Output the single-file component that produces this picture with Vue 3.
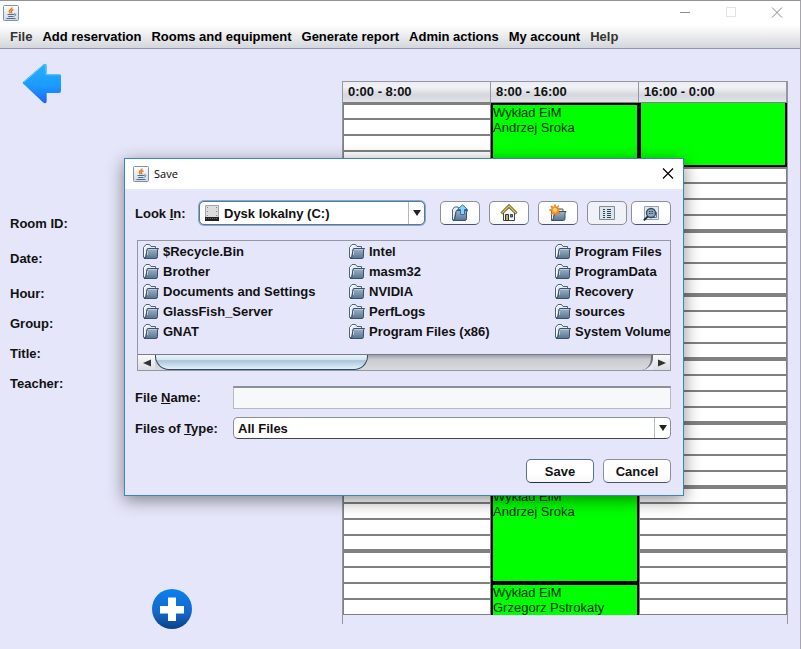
<script setup>
import { ref } from 'vue'

const menus = [
  { label: 'File', soft: true },
  { label: 'Add reservation' },
  { label: 'Rooms and equipment' },
  { label: 'Generate report' },
  { label: 'Admin actions' },
  { label: 'My account' },
  { label: 'Help', soft: true }
]

const details = ['Room ID:', 'Date:', 'Hour:', 'Group:', 'Title:', 'Teacher:']

const shifts = ['0:00 - 8:00', '8:00 - 16:00', '16:00 - 0:00']
const slotCount = 32
const events = [
  { shift: 1, start: 0, length: 4, lines: ['Wykład EiM', 'Andrzej Sroka'] },
  { shift: 2, start: 0, length: 4, lines: [], openTop: true },
  { shift: 1, start: 24, length: 6, lines: ['Wykład EiM', 'Andrzej Sroka'] },
  { shift: 1, start: 30, length: 2, lines: ['Wykład EiM', 'Grzegorz Pstrokaty'], openBottom: true }
]

// Cells of one quarter-hour row; a slot covered by an earlier event has no cell.
function cellsFor(slot) {
  const cells = []
  shifts.forEach((_, shift) => {
    const event = events.find(e => e.shift === shift && slot >= e.start && slot < e.start + e.length)
    if (!event) cells.push({ shift, span: 1, event: null })
    else if (event.start === slot) cells.push({ shift, span: event.length, event })
  })
  return cells
}

const rows = Array.from({ length: slotCount }, (_, slot) => ({
  slot,
  hourStart: slot % 4 === 0 && slot > 0,
  hourEnd: slot % 4 === 3 && slot < slotCount - 1,
  cells: cellsFor(slot)
}))

const folders = [
  '$Recycle.Bin', 'Brother', 'Documents and Settings', 'GlassFish_Server', 'GNAT',
  'Intel', 'masm32', 'NVIDIA', 'PerfLogs', 'Program Files (x86)',
  'Program Files', 'ProgramData', 'Recovery', 'sources', 'System Volume Information'
]

const fileName = ref('')
</script>

<template>
  <div class="window">
    <svg width="0" height="0" class="defs" aria-hidden="true">
      <defs>
        <linearGradient id="folderFill" x1="0" y1="0" x2="0" y2="1">
          <stop offset="0" stop-color="#9fb4c7" /><stop offset="1" stop-color="#557590" />
        </linearGradient>
        <linearGradient id="arrowFill" x1="0" y1="0" x2="0" y2="1">
          <stop offset="0" stop-color="#25b0ff" /><stop offset=".55" stop-color="#1c9bff" /><stop offset="1" stop-color="#1c66f5" />
        </linearGradient>
        <linearGradient id="plusFill" x1="0" y1="0" x2="0" y2="1">
          <stop offset="0" stop-color="#0a80ee" /><stop offset=".6" stop-color="#1467c8" /><stop offset="1" stop-color="#0a3f88" />
        </linearGradient>
        <linearGradient id="javaFill" x1="0" y1="0" x2="0" y2="1">
          <stop offset="0" stop-color="#ffffff" /><stop offset="1" stop-color="#cfd8e2" />
        </linearGradient>
        <symbol id="java" viewBox="0 0 16 16">
          <rect x=".5" y=".5" width="15" height="15" rx="1" fill="url(#javaFill)" stroke="#7f93a6" />
          <path d="M9.300 2.500C9 4.200 5.900 4.700 6.300 6.500c.2.8.8 1.200 1 1.900M10.500 4.800C8.500 5.300 7.600 6.200 8.500 7.200c.3.4.2.8 0 1.200" fill="none" stroke="#e8791c" stroke-width="1.400" />
          <path d="M4.500 9.500h6.500M5.200 11.500h5.300M11 9c2-.6 2.700 1 .4 2.200M3.500 13.500h9" fill="none" stroke="#4a6d92" />
        </symbol>
        <symbol id="folder" viewBox="0 0 16 16">
          <path d="M.5 14.500V4.500L3 1.500h3.500L8 3.500h4.500V6h-8l-2 8.500Z" fill="#e4edf5" stroke="#4d6377" />
          <path d="M1.500 13V5l2-2.500H6" fill="none" stroke="#fff" />
          <path d="M1 15.500c1.500-.5 2-1.500 2.200-3L4 6.500Q4.200 5.500 5 5.500h10.500l-1 1.500v6.500q0 2-1.500 2Z" fill="url(#folderFill)" stroke="#3b5167" />
          <path d="M5 6.500h9M4.500 8v4" stroke="#bccbd9" fill="none" />
        </symbol>
      </defs>
    </svg>

    <header class="titlebar">
      <svg width="16" height="16" role="img" aria-label="Java"><use href="#java" /></svg>
      <div class="window-controls">
        <button type="button" aria-label="Minimize">
          <svg width="12" height="12" viewBox="0 0 12 12"><path d="M1 5.500h10" stroke="#8c8c8c" /></svg>
        </button>
        <button type="button" aria-label="Maximize" disabled>
          <svg width="12" height="12" viewBox="0 0 12 12"><path d="M1.500 .5h9v9h-9z" fill="none" stroke="#e2e2e2" /></svg>
        </button>
        <button type="button" aria-label="Close">
          <svg width="12" height="12" viewBox="0 0 12 12"><path d="M1 .5l10 10M11 .5 1 10.500" stroke="#858585" /></svg>
        </button>
      </div>
    </header>

    <nav class="menubar">
      <button v-for="menu in menus" :key="menu.label" type="button" :class="{ soft: menu.soft }">{{ menu.label }}</button>
    </nav>

    <main class="content">
      <section class="sidebar">
        <button type="button" class="back" aria-label="Back">
          <svg width="40" height="42" viewBox="0 0 40 42">
            <path d="M1 20.500Q.5 19.500 1.500 18.500L21 1.700Q24.500-.5 24.700 3v8H37q2 0 2 2v15q0 2-2 2H24.700v8q-.3 3.500-3.500 1.500Z" fill="url(#arrowFill)" />
            <path d="M2 19 21.500 2.200Q24 1 24 4v7.700H38" fill="none" stroke="#62cbff" />
          </svg>
        </button>
        <ul class="details">
          <li v-for="label in details" :key="label">{{ label }}</li>
        </ul>
        <button type="button" class="add" aria-label="Add">
          <svg width="40" height="40" viewBox="0 0 40 40">
            <circle cx="20" cy="20" r="20" fill="url(#plusFill)" />
            <path d="M16 8.500h8V17h8v7.500h-8V32h-8v-7.500H8V17h8Z" fill="#fff" />
          </svg>
        </button>
      </section>

      <section class="calendar">
        <table>
          <thead>
            <tr><th v-for="shift in shifts" :key="shift" scope="col">{{ shift }}</th></tr>
          </thead>
          <tbody>
            <tr v-for="row in rows" :key="row.slot" :class="{ 'hour-start': row.hourStart, 'hour-end': row.hourEnd }">
              <td
                v-for="cell in row.cells"
                :key="cell.shift"
                :rowspan="cell.span"
                :class="{ event: cell.event, 'open-top': cell.event?.openTop, 'open-bottom': cell.event?.openBottom }"
              >
                <template v-if="cell.event">
                  <div v-for="line in cell.event.lines" :key="line">{{ line }}</div>
                </template>
              </td>
            </tr>
          </tbody>
        </table>
      </section>
    </main>

    <div class="dialog" role="dialog" aria-labelledby="dialog-title">
      <div class="dialog-title">
        <svg width="16" height="16" aria-hidden="true"><use href="#java" /></svg>
        <span id="dialog-title">Save</span>
        <button type="button" aria-label="Close dialog">
          <svg width="12" height="12" viewBox="0 0 12 12"><path d="M1 .5l10 10M11 .5 1 10.500" stroke="#000" stroke-width="1.200" /></svg>
        </button>
      </div>

      <form class="dialog-body" @submit.prevent>
        <div class="look-row">
          <label for="look-in">Look <u>I</u>n:</label>
          <div class="combo focused">
            <select id="look-in"><option>Dysk lokalny (C:)</option></select>
            <svg class="drive" width="14" height="16" viewBox="0 0 14 16" aria-hidden="true">
              <path d="M.5.500h13v12H.5z" fill="#dcdcdc" stroke="#a5a5a5" />
              <path d="M2 2.500h1M11 2.500h1M2 6.500h1M11 6.500h1M2 10.500h1M11 10.500h1" stroke="#888" />
              <path d="M0 12h14v4H0z" fill="#222" /><path d="M1 13.500h12" stroke="#666" stroke-dasharray="1 1" />
            </svg>
            <span class="arrow" aria-hidden="true"></span>
          </div>
          <div class="tools">
            <button type="button" aria-label="Up one level">
              <svg width="18" height="18" viewBox="0 0 18 18">
                <path d="M1.500 16V5.500l2-2.500H7l1 1.500h6V8H5l-2 8Z" fill="#e4edf5" stroke="#4d6377" />
                <path d="M2 16.500c1.500-.5 2-1.500 2.200-3L5 7.500Q5.200 6.500 6 6.500h10.500l-1 1.500v6.500q0 2-1.500 2Z" fill="url(#folderFill)" stroke="#3b5167" />
                <path d="M11.500.8 16.500 5.500h-3v5h-4v-5h-3Z" fill="#8fd0f5" stroke="#2a73b0" />
              </svg>
            </button>
            <button type="button" aria-label="Home">
              <svg width="18" height="18" viewBox="0 0 18 18">
                <path d="M3.500 8.500 9 3.500l5.500 5v8h-11Z" fill="#f4f5f8" stroke="#444" />
                <path d="M1.500 9.500 9 2l7.500 7.500" fill="none" stroke="#65551b" stroke-width="3" />
                <path d="M1.800 9.200 9 2l7.200 7.200" fill="none" stroke="#d9c567" stroke-width="1.300" />
                <path d="M5.500 10.500h3v6h-3z" fill="#c9a968" stroke="#333" /><path d="M10.500 10.500h2v2.500h-2z" fill="#5d8bb5" stroke="#345" />
              </svg>
            </button>
            <button type="button" aria-label="Create new folder">
              <svg width="18" height="18" viewBox="0 0 18 18">
                <path d="M2.500 16V5.500l2-2H8L9 5h5v3H6l-2 8Z" fill="#e4edf5" stroke="#4d6377" />
                <path d="M2.500 16.500c1.500-.5 2-1.500 2.200-3L5.500 8.500Q5.700 7.500 6.500 7.500h10.500l-1 1.500v5.500q0 2-1.500 2Z" fill="url(#folderFill)" stroke="#3b5167" />
                <path d="m6 .5 1 3 2.500-2-.8 3.200 3 .3-2.600 1.600L11 9.500l-3-.8L6.500 12l-1.300-3L2 10.500l1-3.300L.3 6l2.900-1.200L1.800 2l3 1.200Z" fill="#ff9c24" stroke="#e86b16" stroke-width=".7" />
                <circle cx="6" cy="6" r="2" fill="#ffdf6b" />
              </svg>
            </button>
            <button type="button" class="pressed" aria-label="List" aria-pressed="true">
              <svg width="16" height="16" viewBox="0 0 16 16">
                <path d="M.5 1.500h15v13H.5z" fill="#dce5ed" stroke="#7b8c9b" />
                <path d="M4 4.500h2M4 6.500h2M4 8.500h2M4 10.500h2M4 12.500h2M8 4.500h4M8 6.500h4M8 8.500h4M8 10.500h4M8 12.500h4" stroke="#344556" />
              </svg>
            </button>
            <button type="button" class="details-view" aria-label="Details">
              <svg width="16" height="16" viewBox="0 0 16 16">
                <path d="M1.500 1.500h14v13h-14z" fill="#dfe7ef" stroke="#93a2b1" />
                <path d="M7 12.500h6.500V7" stroke="#62768a" fill="none" />
                <circle cx="8" cy="8" r="4.500" fill="#8fabc2" stroke="#34485a" stroke-width="1.300" />
                <path d="M6 6.500h1.500M8.500 6.500H10M6 8.500h1.500M8.500 8.500H10" stroke="#2e3f50" />
                <path d="M4.800 11.300.8 15.300" stroke="#222" stroke-width="1.800" />
              </svg>
            </button>
          </div>
        </div>

        <div class="browser">
          <ul class="files">
            <li v-for="name in folders" :key="name">
              <svg width="16" height="16" aria-hidden="true"><use href="#folder" /></svg>
              <span>{{ name }}</span>
            </li>
          </ul>
          <div class="scrollbar">
            <button type="button" aria-label="Scroll left"><svg width="8" height="8" viewBox="0 0 8 8"><path d="M0 4 8 .5v7Z" fill="#333" /></svg></button>
            <div class="track"><div class="thumb"></div></div>
            <button type="button" aria-label="Scroll right"><svg width="8" height="8" viewBox="0 0 8 8"><path d="M8 4 0 .5v7Z" fill="#333" /></svg></button>
          </div>
        </div>

        <div class="fields">
          <label for="file-name">File <u>N</u>ame:</label>
          <input id="file-name" v-model="fileName" type="text" />
          <label for="file-type">Files of <u>T</u>ype:</label>
          <div class="combo">
            <select id="file-type"><option>All Files</option></select>
            <span class="arrow" aria-hidden="true"></span>
          </div>
        </div>

        <div class="actions">
          <button type="submit" class="primary">Save</button>
          <button type="button">Cancel</button>
        </div>
      </form>
    </div>
  </div>
</template>

<style>
body {
  background: #e6e6fa;
}
</style>

<style scoped>
.window {
  position: relative;
  box-sizing: border-box;
  min-height: 100vh;
  display: flex;
  flex-direction: column;
  border-top: 1px solid #8f9499;
  border-right: 1px solid #a5a5aa;
  background: #e6e6fa;
  color: #111;
  font: bold 13px/15px "Liberation Sans", Arial, sans-serif;
}
.defs {
  position: absolute;
}
button,
input,
select {
  font: inherit;
  color: inherit;
  margin: 0;
  padding: 0;
  box-sizing: border-box;
}
ul {
  list-style: none;
  margin: 0;
  padding: 0;
}
svg {
  display: block;
  flex: none;
}

.titlebar {
  height: 24px;
  display: flex;
  align-items: center;
  justify-content: space-between;
  padding-left: 3px;
  background: #fff;
}
.window-controls {
  display: flex;
}
.window-controls button {
  width: 46px;
  height: 24px;
  display: grid;
  place-items: center;
  border: 0;
  background: none;
}
.menubar {
  height: 24px;
  box-sizing: border-box;
  display: flex;
  align-items: center;
  gap: 10px;
  padding: 0 10px;
  border-bottom: 1px solid #9297a1;
  background: linear-gradient(#fff, #f3f3f5 30%, #d3d6db);
}
.menubar button {
  border: 0;
  background: none;
  white-space: nowrap;
  color: #000;
}
.menubar .soft {
  color: #333;
}

.content {
  flex: 1;
  display: flex;
}
.sidebar {
  width: 342px;
  flex: none;
  display: flex;
  flex-direction: column;
}
.back,
.add {
  border: 0;
  background: none;
}
.back {
  align-self: flex-start;
  margin: 14px 0 0 22px;
}
.details {
  display: flex;
  flex-direction: column;
  gap: 15px;
  padding: 111px 10px 0;
}
.details li:nth-child(-n + 2) {
  padding-bottom: 5px;
}
.add {
  align-self: flex-start;
  margin: auto 0 20px 152px;
}

.calendar {
  flex: 1;
  align-self: flex-start;
  margin: 32px 12px 0 0;
  padding-bottom: 9px;
  border: 1px solid #9297a1;
  border-bottom: 0;
}
table {
  width: 100%;
  table-layout: fixed;
  border-collapse: separate;
  border-spacing: 0;
}
th {
  box-sizing: border-box;
  height: 21px;
  padding: 0 5px 2px;
  text-align: left;
  border-right: 1px solid #9297a1;
  border-bottom: 1px solid #808080;
  background: linear-gradient(#ececf2, #f1f2f5 25%, #d4d7dd 65%, #e2e4ea);
}
td {
  box-sizing: border-box;
  height: 16px;
  padding: 0;
  border: 1px solid #808080;
  background: #fff;
  font-weight: normal;
  line-height: 15px;
  vertical-align: top;
}
tbody tr:first-child td,
.hour-start td {
  border-top-width: 2px;
}
.hour-end td {
  border-bottom-width: 2px;
}
tbody tr td.event {
  border: 2px solid #000;
  background: #0f0;
  color: #002d00;
}
tbody tr td.open-top {
  border-top: 0;
}
tbody tr td.open-bottom {
  border-bottom: 0;
}

.dialog {
  position: absolute;
  left: 124px;
  top: 157px;
  width: 560px;
  box-sizing: border-box;
  border: 1px solid #3a86bd;
  background: #e6e6fa;
  box-shadow: 0 4px 16px rgba(0, 0, 0, 0.45);
}
.dialog-title {
  height: 30px;
  display: flex;
  align-items: center;
  gap: 5px;
  padding: 0 9px 0 8px;
  background: #fff;
  color: #000;
  font: 11px/16px "Open Sans", "Noto Sans", sans-serif;
}
.dialog-title button {
  margin-left: auto;
  border: 0;
  background: none;
}
.dialog-body {
  padding: 12px 12px 12px 10px;
}
.look-row {
  display: flex;
  align-items: center;
}
.look-row label {
  width: 64px;
}
.look-row .combo {
  flex: 1;
}
.combo {
  position: relative;
  display: flex;
}
.combo select {
  appearance: none;
  width: 100%;
  height: 22px;
  padding: 0 20px 0 4px;
  border: 1px solid #8a8f98;
  border-bottom-color: #3f4650;
  border-radius: 5px;
  background: #fff;
  outline: none;
}
.focused select {
  height: 24px;
  padding-left: 24px;
  border-color: #557a9c;
  box-shadow: 0 0 0 1px #8aa8c4;
}
.drive {
  position: absolute;
  left: 6px;
  top: 4px;
}
.arrow {
  position: absolute;
  top: 1px;
  right: 1px;
  bottom: 1px;
  width: 15px;
  border-left: 1px solid #b5b9c0;
  display: grid;
  place-items: center;
  pointer-events: none;
}
.arrow::after {
  content: "";
  border: solid transparent;
  border-width: 6px 4px 0;
  border-top-color: #222;
}
.tools {
  display: flex;
  gap: 9px;
  margin-left: 15px;
}
.tools button {
  width: 40px;
  height: 24px;
  display: grid;
  place-items: center;
}
.tools button,
.actions button {
  border: 1px solid #8a8f98;
  border-bottom-color: #4d545e;
  border-radius: 5px;
  background: linear-gradient(#fff, #fff 60%, #f6f7fa);
}
.tools .pressed {
  border-color: #8a8f98;
  background: #f1f2f8;
}
.tools .details-view {
  margin-left: -5px;
}

.browser {
  margin: 15px 0 0 2px;
  border: 1px solid #9297a1;
}
.files {
  display: grid;
  grid-auto-flow: column;
  grid-template-rows: repeat(5, 20px);
  grid-auto-columns: 206px;
  padding: 0 0 13px 5px;
  overflow: hidden;
}
.files li {
  display: flex;
  align-items: center;
  gap: 4px;
  white-space: nowrap;
}
.scrollbar {
  display: flex;
  height: 15px;
  border-top: 1px solid #777c85;
}
.scrollbar button {
  width: 17px;
  display: grid;
  place-items: center;
  border: 0;
  background: linear-gradient(#fafafc, #dcdde2);
}
.track {
  flex: 1;
  background: linear-gradient(#9c9fa6, #c9cbd0 30%, #dadbdf);
  border-right: 2px solid #6b6f77;
  border-radius: 0 0 12px 0;
}
.thumb {
  box-sizing: border-box;
  width: 43%;
  height: 15px;
  border: 1px solid #34495e;
  border-top: 0;
  border-radius: 0 0 14px 14px;
  background: linear-gradient(#eaf2f8, #d5e4ef 35%, #a9c5d9 40%, #e2f2fc);
}

.fields {
  display: grid;
  grid-template-columns: 98px 1fr;
  align-items: center;
  row-gap: 8px;
  margin-top: 15px;
}
.fields input {
  width: 100%;
  height: 23px;
  padding: 0 4px;
  border: 1px solid #b5b9c0;
  border-top: 2px solid #8a8f98;
  border-radius: 0;
  background: #f6f8fa;
}
.actions {
  display: flex;
  justify-content: flex-end;
  gap: 9px;
  margin-top: 20px;
}
.actions button {
  width: 68px;
  height: 24px;
}
.actions .primary {
  border-color: #56748e;
  border-bottom-color: #26313c;
}
</style>
